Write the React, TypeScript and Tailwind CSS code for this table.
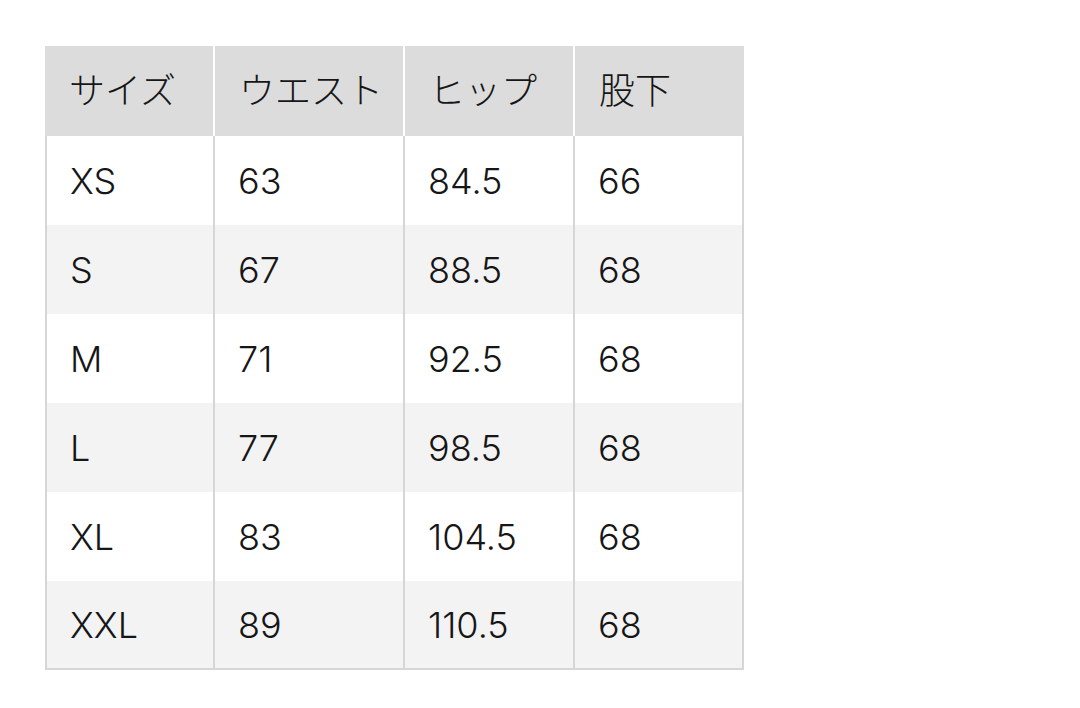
import React from 'react';

const headers = ['サイズ', 'ウエスト', 'ヒップ', '股下'];

const rows: string[][] = [
  ['XS', '63', '84.5', '66'],
  ['S', '67', '88.5', '68'],
  ['M', '71', '92.5', '68'],
  ['L', '77', '98.5', '68'],
  ['XL', '83', '104.5', '68'],
  ['XXL', '89', '110.5', '68'],
];

const font = { fontFamily: 'Inter, "Noto Sans CJK JP", sans-serif' };

const App: React.FC = () => {
  return (
    <div className="min-h-screen bg-white pl-[45px] pt-[46px] text-[#161616]" style={font}>
      <div className="w-[699px]">
        <div className="grid h-[90px] grid-cols-[170px_190px_170px_169px]">
          {headers.map((h, i) => (
            <div
              key={h}
              className={`flex items-center bg-[#dcdcdc] pl-[24px] text-[36px] font-light ${i < 3 ? 'border-r-2 border-white' : ''}`}
            >
              {h}
            </div>
          ))}
        </div>
        <div className="border-x-2 border-b-2 border-[#d6d6d6]">
          {rows.map((r, ri) => (
            <div
              key={r[0]}
              className={`grid grid-cols-[168px_190px_170px_167px] ${ri === 5 ? 'h-[87px]' : 'h-[89px]'} ${ri % 2 === 1 ? 'bg-[#f3f3f3]' : 'bg-white'}`}
            >
              {r.map((c, ci) => (
                <div
                  key={ci}
                  className={`flex items-center pl-[23px] text-[36px] font-light ${ci < 3 ? 'border-r-2 border-[#d6d6d6]' : ''}`}
                >
                  {c}
                </div>
              ))}
            </div>
          ))}
        </div>
      </div>
    </div>
  );
};

export default App;
